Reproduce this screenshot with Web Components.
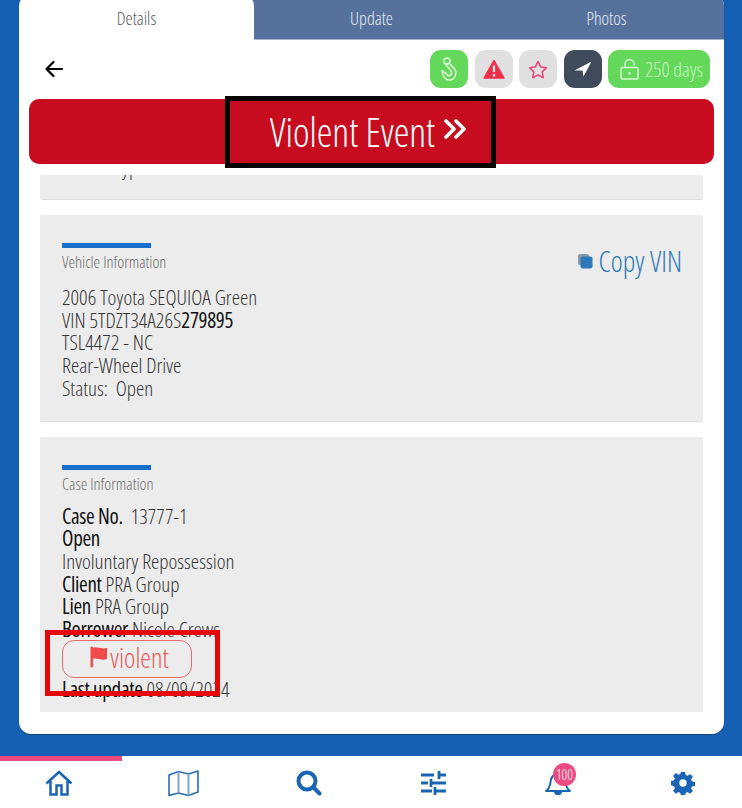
<!DOCTYPE html>
<html>
<head>
<meta charset="utf-8">
<style>
  html, body { margin: 0; height: 808px; overflow: hidden; background: #1560b2; }
  body { font-family: "Open Sans", "Liberation Sans", sans-serif; font-weight: 300; font-stretch: 75%; }
  info-card .dark { color: #111; font-weight: 400; letter-spacing: -.3px; }
</style>
</head>
<body>
<work-panel>
  <tab-bar></tab-bar>
  <tool-row></tool-row>
  <event-banner></event-banner>
  <scroll-pane>
    <info-card clipped>
      <div style="margin-top:-19px;padding-left:22px;">Vehicle Type</div>
    </info-card>
    <info-card heading="Vehicle Information" copy>
      <div>2006 Toyota SEQUIOA Green</div>
      <div>VIN 5TDZT34A26S<span class="dark">279895</span></div>
      <div>TSL4472 - NC</div>
      <div>Rear-Wheel Drive</div>
      <div>Status:&nbsp; Open</div>
    </info-card>
    <info-card heading="Case Information" style="--label-gap:11px">
      <div><span class="dark">Case No.</span>&nbsp; 13777-1</div>
      <div class="dark">Open</div>
      <div>Involuntary Repossession</div>
      <div><span class="dark">Client</span> PRA Group</div>
      <div><span class="dark">Lien</span> PRA Group</div>
      <div><span class="dark">Borrower</span> Nicole Crews</div>
      <flag-chip>violent</flag-chip>
      <div><span class="dark">Last update</span> 08/09/2024</div>
    </info-card>
  </scroll-pane>
</work-panel>
<nav-bar></nav-bar>

<script>
class WorkPanel extends HTMLElement {
  constructor() {
    super();
    this.attachShadow({ mode: "open" });
    this.shadowRoot.innerHTML = `
      <style>
        :host {
          display: flex;
          flex-direction: column;
          width: 705px;
          height: 740px;
          margin: -6px 0 0 19px;
          background: #fff;
          border-radius: 12px;
          box-shadow: 0 1px 1px rgba(0,0,0,.3);
          overflow: hidden;
        }
      </style>
      <slot></slot>`;
  }
}
customElements.define("work-panel", WorkPanel);

class TabBar extends HTMLElement {
  constructor() {
    super();
    this.attachShadow({ mode: "open" });
    this.shadowRoot.innerHTML = `
      <style>
        :host { display: grid; grid-template-columns: 235px 235px 235px; height: 46px; background: #55719c; font-size: 18px; flex: none; }
        div { display: flex; align-items: center; justify-content: center; padding: 6px 0 4px; box-sizing: border-box; color: #e6ebf3; border-bottom: 1px solid #a9b8cc; }
        .on { color: #5a5a5a; background: #fff; border: 0; border-radius: 12px 12px 0 0; }
      </style>
      <div class="on">Details</div><div>Update</div><div>Photos</div>`;
  }
}
customElements.define("tab-bar", TabBar);

class ToolRow extends HTMLElement {
  constructor() {
    super();
    this.attachShadow({ mode: "open" });
    this.shadowRoot.innerHTML = `
      <style>
        :host { display: flex; align-items: center; flex: none; height: 59px; padding: 0 14px 1px 25px; box-sizing: border-box; }
        .back { margin-right: auto; display: block; }
        .btn { display: flex; align-items: center; justify-content: center; width: 38px; height: 38px; border-radius: 11px; margin-left: 6.500px; background: #e0e0e0; }
        .green { background: #64d85a; }
        .dark { background: #3f4a5a; }
        .days { width: 102px; box-sizing: border-box; padding-left: 5px; gap: 6px; color: #c8f6c2; font-size: 20px; white-space: nowrap; }
      </style>
      <svg class="back" width="20" height="20" viewBox="0 0 20 20" fill="none" stroke="#000" stroke-width="2.200" stroke-linecap="round" stroke-linejoin="round"><path d="M18 10H2.500M9.500 3l-7 7 7 7"/></svg>
      <div class="btn green">
        <svg width="17" height="25" viewBox="0 0 17 25" fill="none" stroke="#dff8da" stroke-width="1.500" stroke-linecap="round" stroke-linejoin="round"><circle cx="6" cy="4" r="3"/><path d="M8.500 6.500 13.500 12C16.500 16 14 23 8.500 23 3.500 23 1 18 1.200 13.500L4.500 16.500M4 6.800 9.500 13C11.500 15.500 10.500 18.800 8 18.800 6.500 18.800 5.500 17.500 5 16"/></svg>
      </div>
      <div class="btn">
        <svg width="22" height="20" viewBox="0 0 22 20"><path d="M11 1.500 21 19H1z" fill="#f0304a" stroke="#f0304a" stroke-width="1.500" stroke-linejoin="round"/><path d="M11 6.500v6.500M11 15v2.500" stroke="#e8e8e8" stroke-width="2.200"/></svg>
      </div>
      <div class="btn">
        <svg width="20" height="19" viewBox="0 0 20 19" fill="none" stroke="#e8487a" stroke-width="1.600" stroke-linejoin="round"><path d="M10 1.500l2.600 5.400 5.900.8-4.300 4.100 1 5.900-5.200-2.800-5.200 2.800 1-5.900L1.500 7.700l5.900-.8z"/></svg>
      </div>
      <div class="btn dark">
        <svg width="18" height="16" viewBox="0 0 18 16"><path d="M17.500 .5 .5 9.500h8l1 6z" fill="#fff"/></svg>
      </div>
      <div class="btn green days">
        <svg width="19" height="21" viewBox="0 0 19 21" fill="none" stroke="#d6f8d0" stroke-width="1.500"><rect x="1" y="8.500" width="17" height="11.500" rx="1.500"/><path d="M5 8.500V5a4.500 4.500 0 0 1 9 0v1.500"/><path d="M9.500 13v2.500" stroke-width="2"/></svg>
        <span>250 days</span>
      </div>`;
  }
}
customElements.define("tool-row", ToolRow);

class EventBanner extends HTMLElement {
  constructor() {
    super();
    this.attachShadow({ mode: "open" });
    this.shadowRoot.innerHTML = `
      <style>
        :host { display: flex; align-items: center; flex: none; height: 65px; margin: 0 10px; background: #c60c1e; border-radius: 10px; }
        .box { display: flex; align-items: center; justify-content: center; gap: 8px; flex: none; box-sizing: border-box; width: 271px; height: 72px; margin-left: 196px; padding-left: 16px; border: 5px solid #000; color: #fff; font-size: 39.500px; }
      </style>
      <div class="box"><span>Violent Event</span>
        <svg width="24" height="20" viewBox="0 0 24 20" fill="none" stroke="#fff" stroke-width="3.600" stroke-linecap="round" stroke-linejoin="round" style="margin-top:-6px"><path d="M3 2l8 8-8 8M13 2l8 8-8 8"/></svg>
      </div>`;
  }
}
customElements.define("event-banner", EventBanner);

class ScrollPane extends HTMLElement {
  constructor() {
    super();
    this.attachShadow({ mode: "open" });
    this.shadowRoot.innerHTML = `
      <style>
        :host { display: flex; flex-direction: column; gap: 16px; flex: none; height: 537px; margin-top: 11px; padding: 0 21px; overflow: hidden; }
      </style>
      <slot></slot>`;
  }
}
customElements.define("scroll-pane", ScrollPane);

class InfoCard extends HTMLElement {
  constructor() {
    super();
    this.attachShadow({ mode: "open" });
    const heading = this.getAttribute("heading");
    const copy = this.hasAttribute("copy") ? `
      <div class="copy">
        <svg width="15" height="15" viewBox="0 0 15 15"><rect x="0" y="0" width="11" height="11" rx="2" fill="#8a9aa8"/><rect x="2.500" y="2.500" width="12" height="12" rx="2" fill="#2f7ab8"/></svg>
        <span>Copy VIN</span>
      </div>` : "";
    this.shadowRoot.innerHTML = `
      <style>
        :host { display: block; flex: none; background: #ececec; border-radius: 2px; box-shadow: 0 1px 1px rgba(0,0,0,.14); color: #363636; font-size: 21px; line-height: 22.700px; }
        :host([clipped]) { height: 24px; overflow: hidden; }
        .wrap { padding: 28px 21px 21px 22px; position: relative; }
        .head { display: flex; justify-content: space-between; }
        .bar { width: 89px; height: 5px; background: #1a6fcb; }
        .label { color: #6e6e6e; font-size: 16.500px; line-height: 20px; margin: 4px 0 var(--label-gap, 14px); }
        .copy { display: flex; align-items: center; gap: 6px; color: #2f7ab8; font-size: 28.500px; line-height: 30px; height: 30px; margin-top: 3px; }
      </style>
      ${heading ? `<div class="wrap">
        <div class="head">
          <div><div class="bar"></div><div class="label">${heading}</div></div>${copy}
        </div>
        <slot></slot>
      </div>` : `<slot></slot>`}`;
  }
}
customElements.define("info-card", InfoCard);

class FlagChip extends HTMLElement {
  constructor() {
    super();
    this.attachShadow({ mode: "open" });
    this.shadowRoot.innerHTML = `
      <style>
        :host { display: flex; align-items: center; justify-content: center; position: relative; box-sizing: border-box; width: 130px; height: 38px; margin: -1px 0 0; padding-left: 5px; border: 1px solid #e86a6a; border-radius: 12px; color: #e85c5c; font-size: 27px; }
        .mark { position: absolute; left: -18px; top: -11px; width: 175px; height: 66px; box-sizing: border-box; border: 5px solid #e60808; }
      </style>
      <svg width="18" height="22" viewBox="0 0 18 22" style="margin-right:2px;margin-top:-4px"><path d="M1 1h1.500v20H1z" fill="#f04a4a" stroke="#f04a4a"/><path d="M2.500 2c4-2 7 1.500 14.500 0v11c-7 2-10-1.500-14.500 0z" fill="#f04a4a"/></svg>
      <slot></slot>
      <div class="mark"></div>`;
  }
}
customElements.define("flag-chip", FlagChip);

class NavBar extends HTMLElement {
  constructor() {
    super();
    this.attachShadow({ mode: "open" });
    this.shadowRoot.innerHTML = `
      <style>
        :host { display: grid; grid-template-columns: repeat(6, 1fr); height: 52px; margin: 22px -3px 0; background: #fff; }
        div { display: flex; align-items: center; justify-content: center; position: relative; box-sizing: border-box; padding-bottom: 3px; border-top: 5px solid transparent; }
        .on { border-top-color: #ee4a82; }
        .badge { position: absolute; left: calc(50% - 5px); top: 2px; width: 23px; height: 23px; border-radius: 50%; background: #ee4a82; color: #fff; font-size: 14px; text-align: center; line-height: 23px; }
      </style>
      <div class="on">
        <svg width="28" height="26" viewBox="0 0 28 26" fill="none" stroke="#1a64b4" stroke-width="2.500"><path d="M1.500 13.500 14 2l12.500 11.500M5.500 11v13.500h6v-9h5v9h6V11"/></svg>
      </div>
      <div>
        <svg width="31" height="27" viewBox="0 0 31 27" fill="none" stroke="#2a6db5" stroke-width="1.600" stroke-linejoin="round"><path d="M1 5 10.500 1.500 20.500 4 30 1v21l-9.500 3.500L10.500 23 1 25.500z"/><path d="M10.500 1.500V23M20.500 4v21.500" stroke="#7fa6d0" stroke-width="2"/></svg>
      </div>
      <div>
        <svg width="26" height="26" viewBox="0 0 26 26" fill="none" stroke="#1a64b4" stroke-width="4" stroke-linecap="round"><circle cx="11" cy="11" r="8.500"/><path d="M17.500 17.500 23.500 23.500"/></svg>
      </div>
      <div>
        <svg width="25" height="24" viewBox="0 0 25 24" fill="none" stroke="#1a64b4" stroke-width="2.800"><path d="M0 4H13M18 4H25M18 0V8M0 12H7M10 12H25M10 8V16M0 20H11M14 20H25M14 16V24"/></svg>
      </div>
      <div>
        <svg width="26" height="24" viewBox="0 0 26 24" fill="none" stroke="#1a64b4" stroke-width="2" stroke-linejoin="round"><path d="M1 20c3-2 4-5 4.500-9C6 6 8.500 3 13 3s7 3 7.500 8c.5 4 1.500 7 4.500 9z"/><path d="M10 21c.5 3 5.500 3 6 0z" fill="#1a64b4"/></svg>
        <span class="badge">100</span>
      </div>
      <div>
        <svg width="24" height="24" viewBox="-1 -1 26 26" fill="#1a64b4"><path fill-rule="evenodd" d="M9.800 0h4.400l.7 3.300 2 .8 2.800-1.800 3 3-1.900 2.800.9 2 3.300.7v4.400l-3.300.6-.9 2.100 1.900 2.800-3 3-2.800-1.900-2 .9-.7 3.300H9.800l-.7-3.300-2-.9-2.800 1.900-3-3 1.900-2.800-.9-2.100L-1 14.200V9.800l3.300-.7.9-2L1.300 4.300l3-3 2.800 1.800 2-.8zM12 8a4 4 0 1 0 0 8 4 4 0 0 0 0-8z"/></svg>
      </div>`;
  }
}
customElements.define("nav-bar", NavBar);
</script>
</body>
</html>
